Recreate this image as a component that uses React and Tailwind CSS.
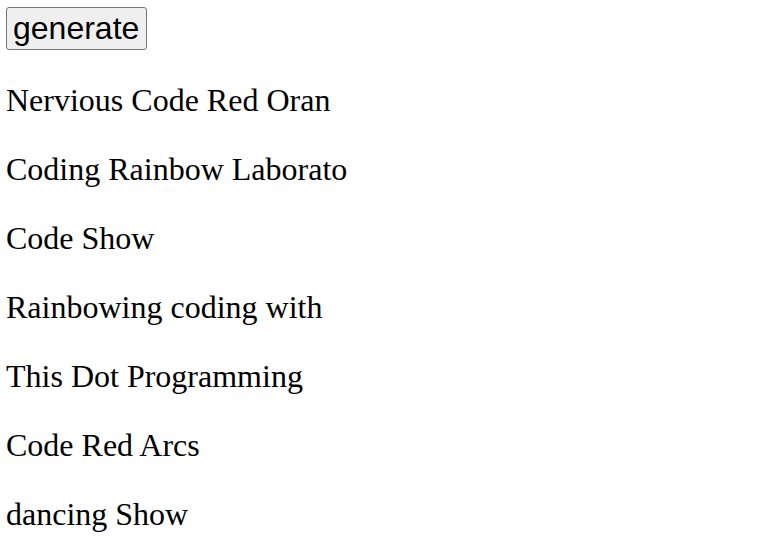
import React from 'react';

const names = [
  'Nervious Code Red Oran',
  'Coding Rainbow Laborato',
  'Code Show',
  'Rainbowing coding with',
  'This Dot Programming',
  'Code Red Arcs',
  'dancing Show',
];

const App = () => {
  return (
    <div className="min-h-screen bg-white text-black pt-[7px] pl-[6px]">
      <button className="block bg-[#efefef] border border-[#767676] rounded-[3px] pl-[6px] pr-[7px] py-[2px] text-[32px] leading-[1.15] text-black font-['Liberation_Sans',Arial,sans-serif]">
        generate
      </button>
      {names.map((name) => (
        <p
          key={name}
          className="mt-[32px] text-[32px] leading-[1.155] font-['Liberation_Serif','Times_New_Roman',serif]"
        >
          {name}
        </p>
      ))}
    </div>
  );
};

export default App;
